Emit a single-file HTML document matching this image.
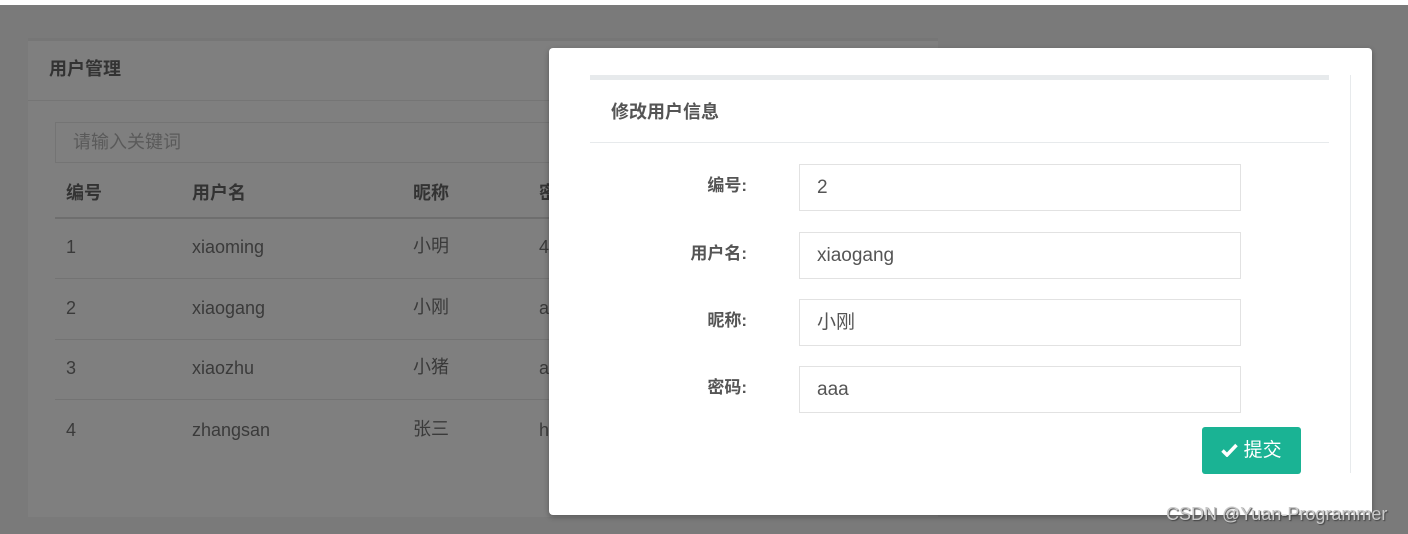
<!DOCTYPE html>
<html><head><meta charset="utf-8"><style>
body{margin:0;width:1408px;height:534px;background:#7a7a7a;position:relative;overflow:hidden;font-family:"Liberation Sans","Noto Sans CJK SC",sans-serif}
.a{position:absolute;line-height:22px}
.top{left:0;top:0;width:1408px;height:5px;background:#fff}
.panel{left:28px;top:38px;width:910px;height:476px;background:#7f7f7f;border-top:3px solid #767676}
.t{color:#333;font-weight:bold;font-size:18px}
.c{color:#3a3a3a;font-size:18px}
.row{left:55px;width:500px;height:1px;background:#737373}
.modal{left:549px;top:48px;width:823px;height:467px;background:#fff;border-radius:4px;box-shadow:0 2px 6px rgba(0,0,0,.3)}
.lab{color:#555;font-weight:bold;font-size:17px;width:158px;text-align:right}
.inp{left:250px;width:442px;height:47px;border:1px solid #e2e2e2;box-sizing:border-box;font-size:19px;color:#555;padding:0 17px;line-height:45px}
</style></head><body>
<div class="a top"></div>
<div class="a panel"></div>
<div class="a t" style="left:49px;top:58px">用户管理</div>
<div class="a" style="left:28px;top:100px;width:910px;height:1px;background:#757575"></div>
<div class="a" style="left:55px;top:122px;width:500px;height:41px;border:1px solid #747474;box-sizing:border-box"></div>
<div class="a c" style="left:73px;top:131px;color:#5a5a5a">请输入关键词</div>
<div class="a t" style="left:66px;top:182px">编号</div>
<div class="a t" style="left:192px;top:182px">用户名</div>
<div class="a t" style="left:413px;top:182px">昵称</div>
<div class="a t" style="left:539px;top:182px">密</div>
<div class="a row" style="top:217px;height:2px;background:#6e6e6e"></div>
<div class="a c" style="left:66px;top:236px">1</div><div class="a c" style="left:192px;top:236px">xiaoming</div><div class="a c" style="left:413px;top:235px">小明</div><div class="a c" style="left:539px;top:236px">4</div>
<div class="a row" style="top:278px"></div>
<div class="a c" style="left:66px;top:297px">2</div><div class="a c" style="left:192px;top:297px">xiaogang</div><div class="a c" style="left:413px;top:296px">小刚</div><div class="a c" style="left:539px;top:297px">a</div>
<div class="a row" style="top:339px"></div>
<div class="a c" style="left:66px;top:357px">3</div><div class="a c" style="left:192px;top:357px">xiaozhu</div><div class="a c" style="left:413px;top:356px">小猪</div><div class="a c" style="left:539px;top:357px">a</div>
<div class="a row" style="top:399px"></div>
<div class="a c" style="left:66px;top:419px">4</div><div class="a c" style="left:192px;top:419px">zhangsan</div><div class="a c" style="left:413px;top:418px">张三</div><div class="a c" style="left:539px;top:419px">h</div>
<div class="a modal">
 <div class="a" style="left:41px;top:27px;width:739px;height:5px;background:#e7eaec"></div>
 <div class="a" style="left:801px;top:27px;width:1px;height:398px;background:#e7eaec"></div>
 <div class="a" style="left:62px;top:53px;font-weight:bold;font-size:18px;color:#555">修改用户信息</div>
 <div class="a" style="left:41px;top:94px;width:739px;height:1px;background:#e7eaec"></div>
 <div class="a lab" style="left:40px;top:127px">编号:</div><div class="a inp" style="top:116px">2</div>
 <div class="a lab" style="left:40px;top:195px">用户名:</div><div class="a inp" style="top:184px">xiaogang</div>
 <div class="a lab" style="left:40px;top:262px">昵称:</div><div class="a inp" style="top:251px">小刚</div>
 <div class="a lab" style="left:40px;top:329px">密码:</div><div class="a inp" style="top:318px">aaa</div>
 <div class="a" style="left:653px;top:379px;width:99px;height:47px;background:#1ab394;border-radius:3px;color:#fff;font-size:19px;line-height:47px;text-align:center"><svg width="17" height="14" viewBox="0 0 17 14" style="vertical-align:-1px"><path d="M1.5 7.5l4.5 4.5 9.5-10" stroke="#fff" stroke-width="3.5" fill="none"/></svg> 提交</div>
</div>
<div class="a" style="left:1166px;top:503px;font-size:18px;color:#c8c8c8;text-shadow:1px 1px 1px #444">CSDN @Yuan-Programmer</div>
</body></html>
